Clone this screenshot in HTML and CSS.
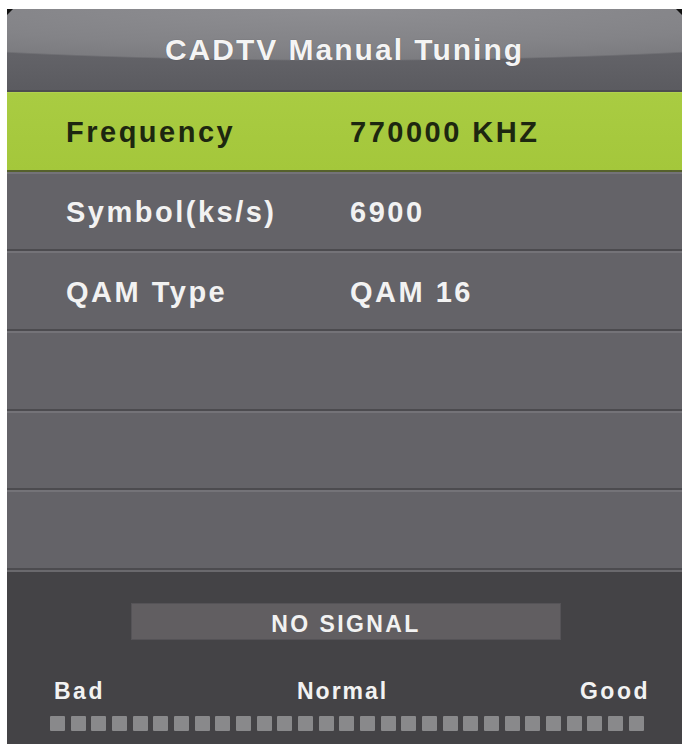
FILE: index.html
```html
<!DOCTYPE html>
<html lang="en">
<head>
<meta charset="utf-8">
<title>CADTV Manual Tuning</title>
<link rel="stylesheet" href="styles.css">
</head>
<body>
<div class="panel">
  <div class="header"><span class="title">CADTV Manual Tuning</span></div>
  <div class="row row-active"><span class="label">Frequency</span><span class="value">770000 KHZ</span></div>
  <div class="row"><span class="label">Symbol(ks/s)</span><span class="value">6900</span></div>
  <div class="row"><span class="label">QAM Type</span><span class="value">QAM 16</span></div>
  <div class="row"></div>
  <div class="row"></div>
  <div class="row"></div>
  <div class="signal">
    <div class="status">NO SIGNAL</div>
    <div class="scale"><span class="bad">Bad</span><span class="normal">Normal</span><span class="good">Good</span></div>
    <div class="meter">
      <span class="seg"></span><span class="seg"></span><span class="seg"></span><span class="seg"></span><span class="seg"></span>
      <span class="seg"></span><span class="seg"></span><span class="seg"></span><span class="seg"></span><span class="seg"></span>
      <span class="seg"></span><span class="seg"></span><span class="seg"></span><span class="seg"></span><span class="seg"></span>
      <span class="seg"></span><span class="seg"></span><span class="seg"></span><span class="seg"></span><span class="seg"></span>
      <span class="seg"></span><span class="seg"></span><span class="seg"></span><span class="seg"></span><span class="seg"></span>
      <span class="seg"></span><span class="seg"></span><span class="seg"></span><span class="seg"></span>
    </div>
  </div>
</div>
</body>
</html>
```
FILE: styles.css
```css
html, body {
  margin: 0;
  padding: 0;
  background: #ffffff;
}

body {
  font-family: "Liberation Sans", Arial, sans-serif;
  font-weight: bold;
}

.panel {
  position: relative;
  margin: 9px 0 0 7px;
  width: 675px;
  height: 735px;
  display: flex;
  flex-direction: column;
  background: #444346;
}

.header {
  position: relative;
  height: 83px;
  flex: none;
  display: flex;
  align-items: center;
  justify-content: center;
  box-sizing: border-box;
  border-bottom: 2px solid #4d4d50;
  background:
    radial-gradient(640px 52px at 50% 0, #8e8e92 0%, #838387 70%, #7c7c80 97%, rgba(124, 124, 128, 0) 100%),
    linear-gradient(#68686d 0%, #626267 60%, #5b5b60 100%);
}

.header::before,
.header::after {
  content: "";
  position: absolute;
  top: 0;
  width: 0;
  height: 0;
  border-top: 6px solid #111;
}

.header::before {
  left: 0;
  border-right: 6px solid transparent;
}

.header::after {
  right: 0;
  border-left: 6px solid transparent;
}

.title {
  font-size: 30px;
  letter-spacing: 2px;
  color: #f4f4f4;
  text-shadow: 0 0 1px rgba(0, 0, 0, 0.35);
}

.row {
  height: 79.67px;
  flex: none;
  box-sizing: border-box;
  display: grid;
  grid-template-columns: 284px auto;
  align-items: center;
  padding-left: 59px;
  padding-top: 3px;
  background: #646368;
  border-top: 2px solid #747378;
  border-bottom: 2px solid #4c4b4f;
  font-size: 29px;
  letter-spacing: 2.5px;
  color: #f2f2f2;
}

.row-active {
  background: linear-gradient(#a9cc42, #a4c73b);
  border-top: 1px solid #b2d24e;
  border-bottom: 2px solid #55602c;
  color: #1d2710;
}

.signal {
  flex: 1;
  box-sizing: border-box;
  border-top: 2px solid #6a696d;
  padding-top: 31px;
  background: #444346;
}

.status {
  margin-left: 124px;
  width: 430px;
  height: 37px;
  box-sizing: border-box;
  padding-top: 6px;
  border: 1px solid #555357;
  background: #615e61;
  display: flex;
  align-items: center;
  justify-content: center;
  font-size: 23px;
  letter-spacing: 2.4px;
  color: #f2f2f2;
}

.scale {
  margin: 38px 32px 0 47px;
  display: grid;
  grid-template-columns: 243px auto 1fr;
  font-size: 23px;
  line-height: 26px;
  letter-spacing: 2.5px;
  color: #f2f2f2;
}

.scale .normal {
  letter-spacing: 2px;
}

.scale .good {
  justify-self: end;
}

.meter {
  margin: 12px 0 0 43px;
  width: 594px;
  display: flex;
  justify-content: space-between;
}

.seg {
  width: 15px;
  height: 15px;
  border-radius: 1px;
  background: #89898b;
}
```
